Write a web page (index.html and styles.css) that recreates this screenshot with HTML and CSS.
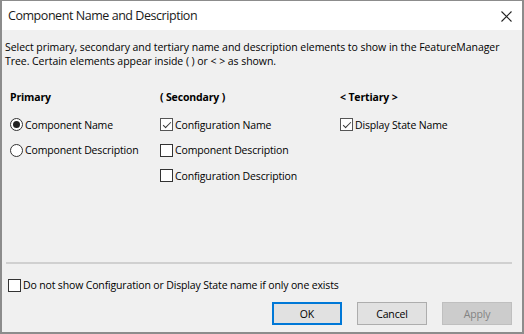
FILE: index.html
```html
<!DOCTYPE html>
<html lang="en">
<head>
    <meta charset="UTF-8">
    <title>Component Name and Description</title>
    <link rel="stylesheet" href="styles.css">
</head>
<body>

<div class="dialog">
    <div class="titlebar">
        <span class="title">Component Name and Description</span>
        <span class="close">
            <svg width="11" height="11" viewBox="0 0 11 11"><path d="M0.5 0.5 L10.5 10.5 M10.5 0.5 L0.5 10.5" stroke="#222" stroke-width="1.1" fill="none"/></svg>
        </span>
    </div>

    <div class="content">
        <p class="intro">Select primary, secondary and tertiary name and description elements to show in the FeatureManager Tree. Certain elements appear inside ( ) or &lt; &gt; as shown.</p>

        <div class="groups">
            <div class="group primary">
                <h3>Primary</h3>
                <div class="option"><span class="radio checked"></span>Component Name</div>
                <div class="option"><span class="radio"></span>Component Description</div>
            </div>
            <div class="group secondary">
                <h3>( Secondary )</h3>
                <div class="option"><span class="box checked"></span>Configuration Name</div>
                <div class="option"><span class="box"></span>Component Description</div>
                <div class="option"><span class="box"></span>Configuration Description</div>
            </div>
            <div class="group tertiary">
                <h3>&lt; Tertiary &gt;</h3>
                <div class="option"><span class="box checked"></span>Display State Name</div>
            </div>
        </div>

        <div class="sep"></div>

        <div class="option single"><span class="box"></span>Do not show Configuration or Display State name if only one exists</div>

        <div class="buttons">
            <button class="btn default">OK</button>
            <button class="btn">Cancel</button>
            <button class="btn disabled">Apply</button>
        </div>
    </div>
</div>

</body>
</html>
```

FILE: styles.css
```css
body {
    margin: 0;
    padding: 0;
    background-color: #f0f0f0;
    font-family: "Open Sans", "Noto Sans", sans-serif;
    font-size: 10.5px;
    letter-spacing: -0.15px;
    color: #000;
}
.dialog {
    box-sizing: border-box;
    width: 524px;
    height: 334px;
    border: 1px solid #8c8c8c;
    border-left-width: 2px;
    border-right-width: 2px;
    border-bottom-width: 2px;
    display: flex;
    flex-direction: column;
    background-color: #f0f0f0;
}
.titlebar {
    height: 29px;
    background-color: #fff;
    display: flex;
    align-items: center;
    justify-content: space-between;
    padding: 0 10px 0 6px;
}
.title {
    font-size: 12.5px;
    letter-spacing: -0.45px;
    color: #1a1a1a;
}
.close {
    display: flex;
    margin-top: 1px;
}
.content {
    flex: 1;
    display: flex;
    flex-direction: column;
    padding: 0 10px 7px 3px;
}
.intro {
    margin: 10px 0 0 0;
    line-height: 14px;
    letter-spacing: -0.05px;
}
.groups {
    display: grid;
    grid-template-columns: 150px 180px 1fr;
    margin: 22px 0 0 5px;
    flex: 1;
}
.group h3 {
    margin: 0 0 8px 0;
    font-size: 10.5px;
    font-weight: bold;
    line-height: 14px;
}
.option {
    display: flex;
    align-items: center;
    height: 25.5px;
    white-space: nowrap;
}
.radio, .box {
    box-sizing: border-box;
    width: 13px;
    height: 13px;
    border: 1px solid #333;
    background-color: #fff;
    margin-right: 2px;
    flex-shrink: 0;
    display: flex;
    align-items: center;
    justify-content: center;
}
.radio {
    border-radius: 50%;
}
.radio.checked::after {
    content: "";
    width: 7px;
    height: 7px;
    border-radius: 50%;
    background-color: #222;
}
.box.checked {
    border-color: #555;
}
.box.checked::after {
    content: "";
    width: 7px;
    height: 3px;
    border-left: 1.2px solid #333;
    border-bottom: 1.2px solid #333;
    transform: translate(0, -1px) rotate(-45deg);
}
.sep {
    height: 2px;
    background-color: #d0d0d0;
    margin: 0 0 13px 1px;
}
.option.single {
    height: 16px;
    margin: 0 0 9px 3px;
}
.buttons {
    display: flex;
    justify-content: flex-end;
    gap: 15px;
}
.btn {
    box-sizing: border-box;
    width: 70px;
    height: 23px;
    font-family: inherit;
    font-size: 10.5px;
    letter-spacing: -0.15px;
    background-color: #e1e1e1;
    border: 1px solid #adadad;
    color: #000;
    padding: 0;
}
.btn.default {
    border: 2px solid #0078d7;
}
.btn.disabled {
    background-color: #cccccc;
    border-color: #bfbfbf;
    color: #838383;
}
```
